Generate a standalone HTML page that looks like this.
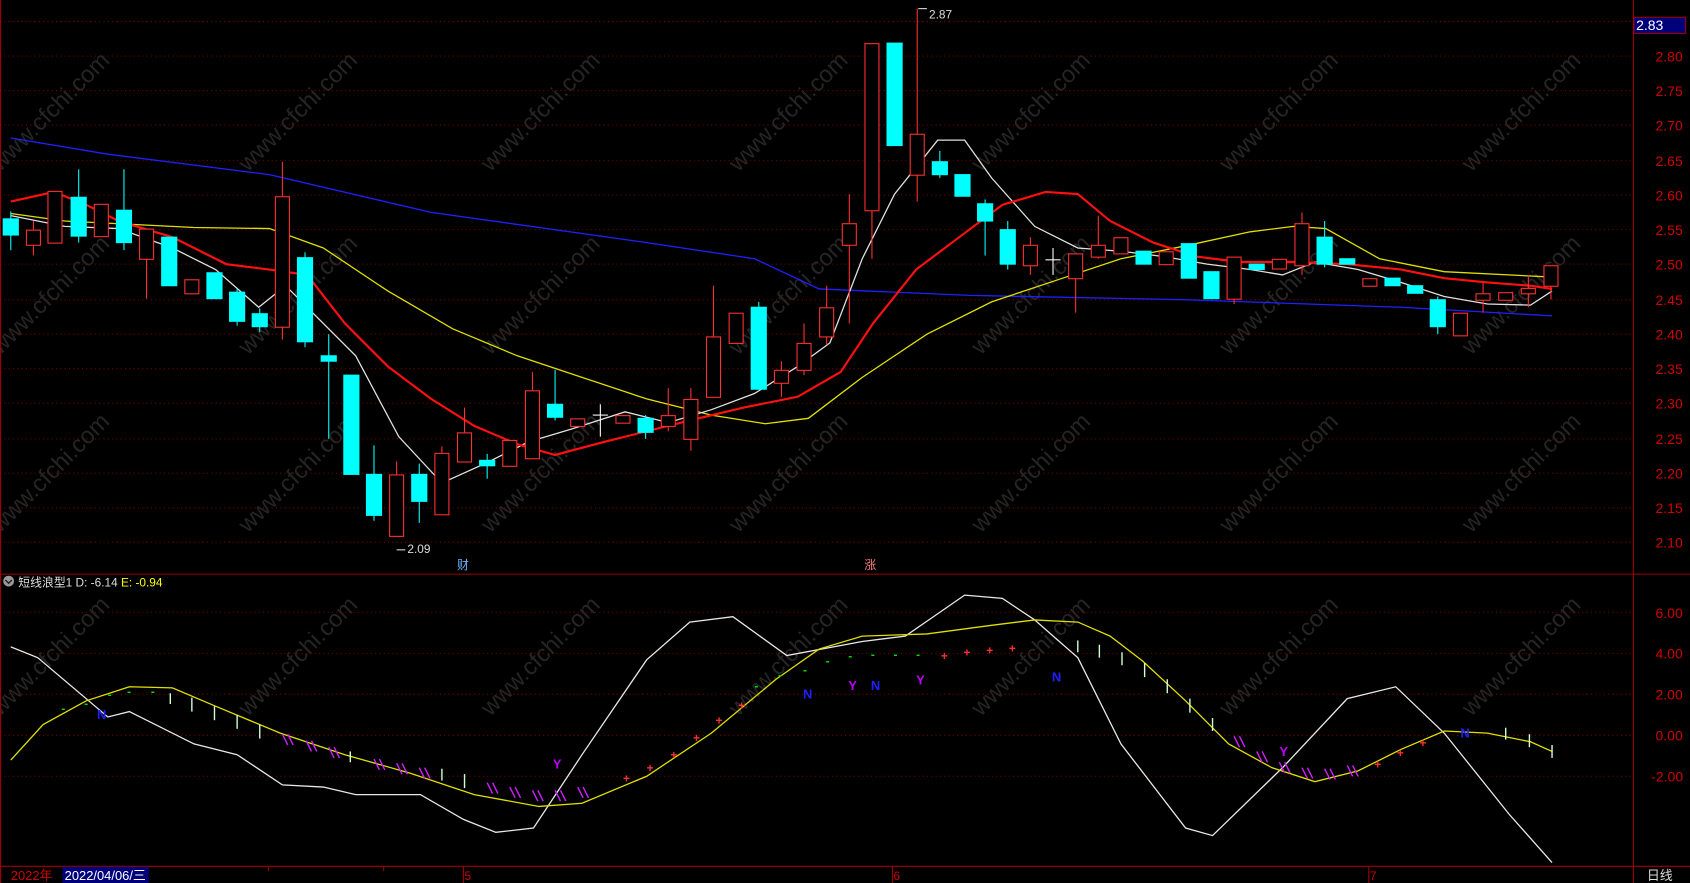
<!DOCTYPE html>
<html><head><meta charset="utf-8"><style>
html,body{margin:0;padding:0;background:#000;overflow:hidden}
svg{display:block}
text{font-family:"Liberation Sans","Noto Sans CJK SC",sans-serif}
</style></head><body>
<svg width="1690" height="883" viewBox="0 0 1568 819" preserveAspectRatio="none" xmlns="http://www.w3.org/2000/svg">
<rect width="1568" height="819" fill="#000"/>
<!-- watermarks -->
<g fill="#2a2a2a" font-size="22" opacity="0.9">
<text transform="translate(0,160) rotate(-45)">www.cfchi.com</text>
<text transform="translate(230,160) rotate(-45)">www.cfchi.com</text>
<text transform="translate(455,160) rotate(-45)">www.cfchi.com</text>
<text transform="translate(685,160) rotate(-45)">www.cfchi.com</text>
<text transform="translate(910,160) rotate(-45)">www.cfchi.com</text>
<text transform="translate(1140,160) rotate(-45)">www.cfchi.com</text>
<text transform="translate(1365,160) rotate(-45)">www.cfchi.com</text>
<text transform="translate(0,330) rotate(-45)">www.cfchi.com</text>
<text transform="translate(230,330) rotate(-45)">www.cfchi.com</text>
<text transform="translate(455,330) rotate(-45)">www.cfchi.com</text>
<text transform="translate(685,330) rotate(-45)">www.cfchi.com</text>
<text transform="translate(910,330) rotate(-45)">www.cfchi.com</text>
<text transform="translate(1140,330) rotate(-45)">www.cfchi.com</text>
<text transform="translate(1365,330) rotate(-45)">www.cfchi.com</text>
<text transform="translate(0,495) rotate(-45)">www.cfchi.com</text>
<text transform="translate(230,495) rotate(-45)">www.cfchi.com</text>
<text transform="translate(455,495) rotate(-45)">www.cfchi.com</text>
<text transform="translate(685,495) rotate(-45)">www.cfchi.com</text>
<text transform="translate(910,495) rotate(-45)">www.cfchi.com</text>
<text transform="translate(1140,495) rotate(-45)">www.cfchi.com</text>
<text transform="translate(1365,495) rotate(-45)">www.cfchi.com</text>
<text transform="translate(0,665) rotate(-45)">www.cfchi.com</text>
<text transform="translate(230,665) rotate(-45)">www.cfchi.com</text>
<text transform="translate(455,665) rotate(-45)">www.cfchi.com</text>
<text transform="translate(685,665) rotate(-45)">www.cfchi.com</text>
<text transform="translate(910,665) rotate(-45)">www.cfchi.com</text>
<text transform="translate(1140,665) rotate(-45)">www.cfchi.com</text>
<text transform="translate(1365,665) rotate(-45)">www.cfchi.com</text>
</g>
<!-- grid -->
<g stroke="#7a0000" stroke-width="1" stroke-dasharray="1,3">
<line x1="0" x2="1515" y1="20" y2="20"/><line x1="0" x2="1515" y1="52" y2="52"/><line x1="0" x2="1515" y1="84" y2="84"/><line x1="0" x2="1515" y1="116" y2="116"/><line x1="0" x2="1515" y1="149" y2="149"/><line x1="0" x2="1515" y1="181" y2="181"/><line x1="0" x2="1515" y1="213" y2="213"/><line x1="0" x2="1515" y1="245" y2="245"/><line x1="0" x2="1515" y1="278" y2="278"/><line x1="0" x2="1515" y1="310" y2="310"/><line x1="0" x2="1515" y1="342" y2="342"/><line x1="0" x2="1515" y1="374" y2="374"/><line x1="0" x2="1515" y1="407" y2="407"/><line x1="0" x2="1515" y1="439" y2="439"/><line x1="0" x2="1515" y1="471" y2="471"/><line x1="0" x2="1515" y1="503" y2="503"/>
<line x1="0" x2="1515" y1="568" y2="568"/><line x1="0" x2="1515" y1="606" y2="606"/><line x1="0" x2="1515" y1="644" y2="644"/><line x1="0" x2="1515" y1="682" y2="682"/><line x1="0" x2="1515" y1="720" y2="720"/>
</g>
<!-- frame -->
<g stroke="#a00000" stroke-width="1" fill="none">
<line x1="1515.5" y1="0" x2="1515.5" y2="819"/>
<line x1="0" y1="532.5" x2="1568" y2="532.5"/>
<line x1="0" y1="803.5" x2="1568" y2="803.5"/>
<line x1="0.5" y1="0" x2="0.5" y2="819"/>
</g>
<!-- right labels -->
<g fill="#d00000" font-size="13">
<text x="1536" y="57">2.80</text><text x="1536" y="89">2.75</text><text x="1536" y="121">2.70</text><text x="1536" y="154">2.65</text><text x="1536" y="186">2.60</text><text x="1536" y="218">2.55</text><text x="1536" y="250">2.50</text><text x="1536" y="283">2.45</text><text x="1536" y="315">2.40</text><text x="1536" y="347">2.35</text><text x="1536" y="379">2.30</text><text x="1536" y="412">2.25</text><text x="1536" y="444">2.20</text><text x="1536" y="476">2.15</text><text x="1536" y="508">2.10</text>
<text x="1536" y="573">6.00</text><text x="1536" y="611">4.00</text><text x="1536" y="649">2.00</text><text x="1536" y="687">0.00</text><text x="1532" y="725">-2.00</text>
</g>
<rect x="1516" y="16" width="48" height="15" fill="#00007a" stroke="#a00000"/>
<text x="1518" y="28" fill="#fff" font-size="13">2.83</text>
<!-- MAs -->
<g fill="none" stroke-width="1.2">
<polyline stroke="#2020ff" points="10,128 100,143 250,162 400,197 600,225 700,240 760,268 900,274 1100,278 1300,285 1440,293"/>
<polyline stroke="#e0e000" points="10,198 60,205 120,208 180,211 250,212 300,230 360,270 420,305 480,330 540,350 600,370 660,385 710,393 750,388 800,350 860,310 920,280 980,260 1040,240 1100,228 1160,215 1200,210 1230,212 1280,240 1340,252 1440,257"/>
<polyline stroke="#e0e0e0" points="10,200 60,210 110,212 160,230 200,250 240,285 265,265 290,290 330,330 370,405 410,448 450,430 490,410 530,398 580,382 620,392 660,380 700,365 740,340 770,318 800,240 830,180 870,130 895,130 920,165 960,210 1000,230 1040,233 1080,238 1120,245 1160,250 1190,255 1220,243 1260,250 1300,262 1340,275 1380,282 1420,283 1440,270"/>
<polyline stroke="#ff1010" stroke-width="2" points="10,187 50,178 80,190 110,205 160,220 210,245 250,250 285,255 320,300 360,340 400,370 440,395 480,412 515,422 560,410 600,400 640,390 690,378 740,368 780,345 810,300 850,250 890,220 930,190 970,178 1000,180 1030,205 1070,225 1110,238 1150,243 1200,243 1250,245 1300,250 1340,258 1380,262 1420,265 1440,268"/>
</g>
<!-- candles -->
<g id="c" stroke-width="1">
<!-- cyan: wick then body; red: hollow -->
<g stroke="#00ffff" fill="#00ffff">
<line x1="10" y1="196" x2="10" y2="232"/><rect x="3" y="203" width="14" height="15"/>
<line x1="73" y1="157" x2="73" y2="225"/><rect x="66" y="183" width="14" height="36"/>
<line x1="115" y1="157" x2="115" y2="232"/><rect x="108" y="195" width="14" height="30"/>
<rect x="150" y="220" width="14" height="45"/>
<rect x="192" y="253" width="14" height="24"/>
<line x1="220" y1="268" x2="220" y2="302"/><rect x="213" y="271" width="14" height="27"/>
<line x1="241" y1="286" x2="241" y2="308"/><rect x="234" y="291" width="14" height="12"/>
<line x1="283" y1="234" x2="283" y2="322"/><rect x="276" y="239" width="14" height="78"/>
<line x1="305" y1="310" x2="305" y2="407"/><rect x="298" y="330" width="14" height="5"/>
<rect x="319" y="348" width="14" height="92"/>
<line x1="347" y1="413" x2="347" y2="483"/><rect x="340" y="440" width="14" height="38"/>
<line x1="389" y1="430" x2="389" y2="485"/><rect x="382" y="440" width="14" height="25"/>
<line x1="452" y1="421" x2="452" y2="444"/><rect x="445" y="427" width="14" height="5"/>
<line x1="515" y1="343" x2="515" y2="390"/><rect x="508" y="375" width="14" height="12"/>
<line x1="599" y1="385" x2="599" y2="407"/><rect x="592" y="388" width="14" height="13"/>
<line x1="704" y1="280" x2="704" y2="361"/><rect x="697" y="285" width="14" height="76"/>
<rect x="823" y="40" width="14" height="95"/>
<line x1="872" y1="140" x2="872" y2="165"/><rect x="865" y="150" width="14" height="12"/>
<rect x="886" y="162" width="14" height="20"/>
<line x1="914" y1="185" x2="914" y2="237"/><rect x="907" y="189" width="14" height="16"/>
<line x1="935" y1="205" x2="935" y2="250"/><rect x="928" y="213" width="14" height="32"/>
<rect x="1054" y="233" width="14" height="12"/>
<rect x="1096" y="226" width="14" height="32"/>
<rect x="1117" y="252" width="14" height="25"/>
<rect x="1159" y="245" width="14" height="5"/>
<line x1="1229" y1="205" x2="1229" y2="248"/><rect x="1222" y="220" width="14" height="25"/>
<rect x="1243" y="240" width="14" height="5"/>
<rect x="1285" y="258" width="14" height="7"/>
<rect x="1306" y="265" width="14" height="7"/>
<line x1="1334" y1="275" x2="1334" y2="310"/><rect x="1327" y="278" width="14" height="25"/>
</g>
<g stroke="#ff3030" fill="#000">
<line x1="31" y1="205" x2="31" y2="213"/><line x1="31" y1="227" x2="31" y2="237"/><rect x="24.5" y="213.5" width="13" height="14"/>
<rect x="44.5" y="177.5" width="13" height="48"/>
<rect x="87.5" y="189.5" width="13" height="30"/>
<line x1="136" y1="240" x2="136" y2="277"/><rect x="129.5" y="212.5" width="13" height="28"/>
<rect x="171.5" y="259.5" width="13" height="13"/>
<line x1="262" y1="150" x2="262" y2="182"/><line x1="262" y1="303" x2="262" y2="315"/><rect x="255.5" y="182.5" width="13" height="121"/>
<line x1="368" y1="428" x2="368" y2="440"/><rect x="361.5" y="440.5" width="13" height="57"/>
<line x1="410" y1="414" x2="410" y2="420"/><rect x="403.5" y="420.5" width="13" height="57"/>
<line x1="431" y1="378" x2="431" y2="401"/><rect x="424.5" y="401.5" width="13" height="27"/>
<rect x="466.5" y="408.5" width="13" height="24"/>
<line x1="494" y1="345" x2="494" y2="362"/><rect x="487.5" y="362.5" width="13" height="63"/>
<rect x="529.5" y="388.5" width="13" height="7"/>
<rect x="571.5" y="385.5" width="13" height="7"/>
<line x1="620" y1="360" x2="620" y2="400"/><rect x="613.5" y="385.5" width="13" height="10"/>
<line x1="641" y1="360" x2="641" y2="418"/><rect x="634.5" y="370.5" width="13" height="37"/>
<line x1="662" y1="265" x2="662" y2="312"/><rect x="655.5" y="312.5" width="13" height="56"/>
<rect x="676.5" y="290.5" width="13" height="28"/>
<line x1="725" y1="335" x2="725" y2="368"/><rect x="718.5" y="343.5" width="13" height="12"/>
<line x1="746" y1="300" x2="746" y2="348"/><rect x="739.5" y="318.5" width="13" height="25"/>
<line x1="767" y1="265" x2="767" y2="320"/><rect x="760.5" y="285.5" width="13" height="27"/>
<line x1="788" y1="180" x2="788" y2="300"/><rect x="781.5" y="207.5" width="13" height="20"/>
<line x1="809" y1="195" x2="809" y2="240"/><rect x="802.5" y="40.5" width="13" height="155"/>
<line x1="851" y1="8" x2="851" y2="124"/><line x1="851" y1="162" x2="851" y2="187"/><rect x="844.5" y="124.5" width="13" height="38"/>
<line x1="956" y1="220" x2="956" y2="255"/><rect x="949.5" y="227.5" width="13" height="19"/>
<line x1="998" y1="258" x2="998" y2="290"/><rect x="991.5" y="235.5" width="13" height="23"/>
<line x1="1019" y1="200" x2="1019" y2="240"/><rect x="1012.5" y="227.5" width="13" height="11"/>
<rect x="1033.5" y="220.5" width="13" height="15"/>
<rect x="1075.5" y="233.5" width="13" height="12"/>
<line x1="1145" y1="277" x2="1145" y2="282"/><rect x="1138.5" y="238.5" width="13" height="39"/>
<rect x="1180.5" y="240.5" width="13" height="9"/>
<line x1="1208" y1="197" x2="1208" y2="255"/><rect x="1201.5" y="207.5" width="13" height="39"/>
<rect x="1264.5" y="258.5" width="13" height="7"/>
<rect x="1348.5" y="290.5" width="13" height="21"/>
<line x1="1376" y1="262" x2="1376" y2="290"/><rect x="1369.5" y="272.5" width="13" height="6"/>
<rect x="1390.5" y="271.5" width="13" height="7"/>
<line x1="1418" y1="255" x2="1418" y2="285"/><rect x="1411.5" y="267.5" width="13" height="5"/>
<line x1="1439" y1="265" x2="1439" y2="278"/><rect x="1432.5" y="246.5" width="13" height="19"/>
</g>
<g stroke="#fff"><line x1="550" y1="385" x2="564" y2="385"/><line x1="557" y1="375" x2="557" y2="405"/><line x1="970" y1="241" x2="984" y2="241"/><line x1="977" y1="230" x2="977" y2="255"/></g>
</g>
<text x="862" y="17" fill="#ddd" font-size="11">2.87</text>
<path d="M852 8 L860 8" stroke="#ddd"/>
<text x="378" y="513" fill="#ddd" font-size="11">2.09</text>
<path d="M368 510 L376 510" stroke="#ddd"/>
<text x="424" y="528" fill="#6ab4ff" font-size="11">财</text>
<text x="802" y="528" fill="#ff8080" font-size="11">涨</text>
<!-- lower panel header -->
<circle cx="8" cy="539" r="5" fill="#999"/><path d="M5 538 L8 541 L11 538" stroke="#222" fill="none" stroke-width="1.3"/>
<text x="17" y="544" font-size="11" fill="#ddd">短线浪型1  D: -6.14 <tspan fill="#ffff00">E: -0.94</tspan></text>
<!-- lower lines -->
<g fill="none" stroke-width="1.2">
<polyline stroke="#e8e8e8" points="10,600 35,610 100,665 120,660 180,690 220,700 262,728 300,730 330,737 390,737 430,760 460,772 495,768 540,700 600,612 640,577 680,572 730,608 800,595 840,590 895,552 930,555 960,575 1000,610 1040,690 1100,768 1125,775 1190,712 1250,648 1295,637 1340,680 1400,755 1440,800"/>
<polyline stroke="#e0e000" points="10,705 40,672 80,650 120,637 160,638 200,655 260,680 320,700 380,717 440,737 500,748 540,745 600,720 660,680 720,630 760,602 800,590 860,588 920,580 960,575 1000,577 1030,590 1060,613 1100,650 1140,690 1180,712 1220,725 1260,715 1300,695 1340,678 1380,680 1420,688 1440,697"/>
</g>
<!-- markers -->
<g font-size="11" font-weight="bold">
<g fill="#00e000"><text x="57" y="661">-</text><text x="78" y="656">-</text><text x="100" y="648">-</text><text x="118" y="645">-</text><text x="140" y="645">-</text><text x="700" y="640">-</text><text x="722" y="630">-</text><text x="745" y="625">-</text><text x="766" y="617">-</text><text x="787" y="612">-</text><text x="808" y="611">-</text><text x="829" y="611">-</text><text x="850" y="611">-</text></g>
<g fill="#2020ff" font-size="12"><text x="90" y="667">N</text><text x="745" y="648">N</text><text x="808" y="640">N</text><text x="976" y="632">N</text><text x="1355" y="684">N</text></g>
<g fill="#c000ff" font-size="12"><text x="787" y="640">Y</text><text x="850" y="635">Y</text><text x="513" y="713">Y</text><text x="1187" y="701">Y</text></g>
<g fill="#ff3030"><text x="578" y="726">+</text><text x="600" y="716">+</text><text x="622" y="704">+</text><text x="643" y="688">+</text><text x="664" y="672">+</text><text x="685" y="658">+</text><text x="873" y="612">+</text><text x="894" y="609">+</text><text x="915" y="607">+</text><text x="936" y="605">+</text><text x="1275" y="713">+</text><text x="1296" y="702">+</text><text x="1317" y="693">+</text></g>
</g>
<g stroke-width="1.3">
<g stroke="#d0ffd0"><line x1="158" y1="643" x2="158" y2="653"/><line x1="178" y1="647" x2="178" y2="660"/><line x1="199" y1="655" x2="199" y2="668"/><line x1="220" y1="663" x2="220" y2="676"/><line x1="241" y1="672" x2="241" y2="685"/><line x1="325" y1="697" x2="325" y2="707"/><line x1="410" y1="713" x2="410" y2="724"/><line x1="431" y1="718" x2="431" y2="731"/><line x1="1000" y1="594" x2="1000" y2="605"/><line x1="1020" y1="598" x2="1020" y2="610"/><line x1="1041" y1="605" x2="1041" y2="617"/><line x1="1062" y1="615" x2="1062" y2="628"/><line x1="1083" y1="630" x2="1083" y2="643"/><line x1="1104" y1="648" x2="1104" y2="661"/><line x1="1125" y1="666" x2="1125" y2="678"/><line x1="1397" y1="675" x2="1397" y2="686"/><line x1="1419" y1="681" x2="1419" y2="693"/><line x1="1440" y1="691" x2="1440" y2="703"/></g>
<g stroke="#d020ff">
<path d="M262 681 l5 10 M267 681 l5 10 M284 687 l5 10 M289 687 l5 10 M305 693 l5 10 M310 693 l5 10 M347 704 l5 10 M352 704 l5 10 M368 708 l5 10 M373 708 l5 10 M389 712 l5 10 M394 712 l5 10 M452 726 l5 10 M457 726 l5 10 M473 730 l5 10 M478 730 l5 10 M494 733 l5 10 M499 733 l5 10 M515 733 l5 10 M520 733 l5 10 M536 730 l5 10 M541 730 l5 10 M1145 683 l5 10 M1150 683 l5 10 M1166 697 l5 10 M1171 697 l5 10 M1187 707 l5 10 M1192 707 l5 10 M1208 712 l5 10 M1213 712 l5 10 M1229 713 l5 10 M1234 713 l5 10 M1250 710 l5 10 M1255 710 l5 10"/>
</g></g>
<!-- bottom axis -->
<text x="10" y="816" fill="#d00000" font-size="12">2022年</text>
<rect x="58" y="804" width="80" height="15" fill="#00007a"/>
<text x="60" y="816" fill="#fff" font-size="12">2022/04/06/三</text>
<text x="431" y="816" fill="#d00000" font-size="11">5</text>
<text x="829" y="816" fill="#d00000" font-size="11">6</text>
<text x="1271" y="816" fill="#d00000" font-size="11">7</text>
<g stroke="#a00000"><line x1="249" y1="804" x2="249" y2="808"/><line x1="356" y1="804" x2="356" y2="808"/><line x1="430" y1="804" x2="430" y2="819"/><line x1="828" y1="804" x2="828" y2="819"/><line x1="1270" y1="804" x2="1270" y2="819"/></g>
<text x="1528" y="816" fill="#ddd" font-size="12">日线</text>
</svg>
</body></html>
